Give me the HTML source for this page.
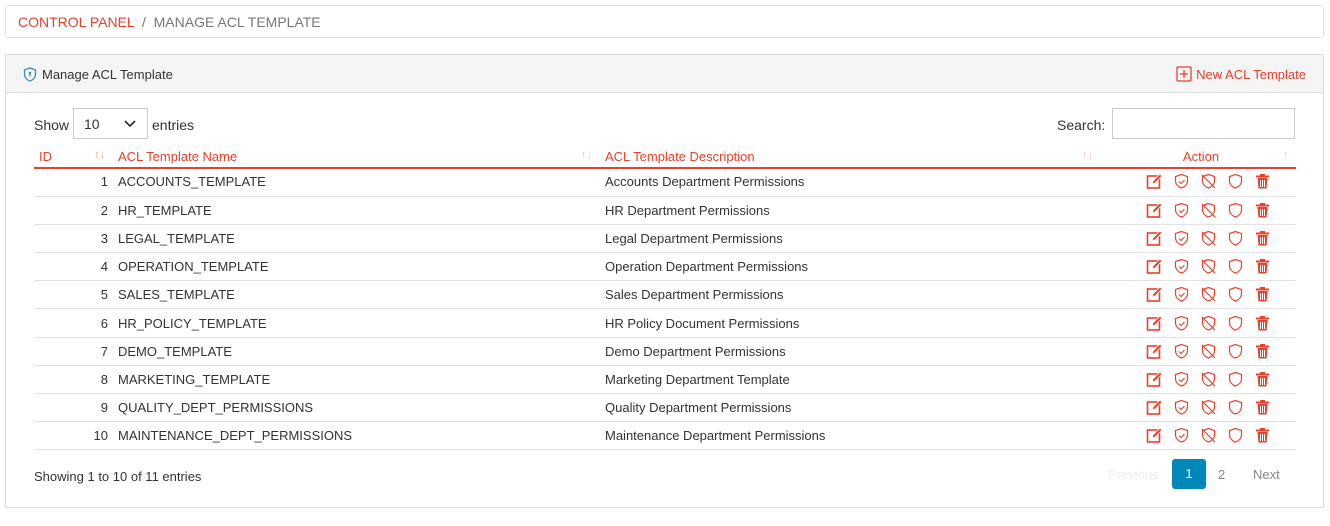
<!DOCTYPE html>
<html><head><style>
*{box-sizing:border-box;margin:0;padding:0}
body{width:1330px;height:526px;background:#fff;font-family:"Liberation Sans",sans-serif;font-size:13px;color:#333;position:relative;overflow:hidden}
.bc{position:absolute;left:5px;top:5px;width:1319px;height:33px;border:1px solid #e3e3e3;border-radius:3px;padding:8px 12px;font-size:14px;color:#777}
.bc span{color:#e8412c}
.panel{position:absolute;left:5px;top:54px;width:1319px;height:454px;border:1px solid #ddd}
.ph{height:38px;background:#f5f5f5;border-bottom:1px solid #ddd;position:relative}
.ph .t{position:absolute;left:17px;top:12px;display:flex;align-items:center;gap:5px}
.ph .n{position:absolute;right:17px;top:11px;color:#e8412c;display:flex;align-items:center;gap:4px}
.abs{position:absolute}
table{position:absolute;left:28px;top:90px;width:1262px;border-collapse:collapse}
th{color:#e8412c;font-weight:normal;text-align:left;height:23px;border-bottom:2px solid #e8412c;position:relative;padding-left:5px}
td{height:28.2px;border-bottom:1px solid #e3e3e3;padding-left:5px}
.s{position:absolute;right:8px;top:4px;color:#f4c0b8;font-size:11px}
.ic{display:flex;gap:10px;padding-left:40px;align-items:center}
</style></head><body>
<div class="bc"><span>CONTROL PANEL</span> &nbsp;/&nbsp; MANAGE ACL TEMPLATE</div>
<div class="panel">
<div class="ph"><div class="t"><svg width="14" height="15" viewBox="0 0 14 15"><path d="M7 1L1.5 3v4c0 3.5 2.5 6 5.5 7 3-1 5.5-3.5 5.5-7V3z" fill="none" stroke="#3a8fc0" stroke-width="1.3"/><circle cx="7" cy="6" r="1.3" fill="#3a8fc0"/><rect x="6.4" y="6.5" width="1.2" height="3" fill="#3a8fc0"/></svg>Manage ACL Template</div>
<div class="n"><svg width="16" height="16"><rect x="1" y="1" width="14" height="14" fill="none" stroke="#e8412c" stroke-width="1.3" rx="1"/><path d="M8 4v8M4 8h8" stroke="#e8412c" stroke-width="1.3"/></svg>New ACL Template</div></div>
<div class="abs" style="left:28px;top:62px;font-size:14px">Show</div>
<div class="abs" style="left:67px;top:53px;width:75px;height:31px;border:1px solid #ccc;font-size:14px;padding:7px 10px">10<svg class="abs" style="left:50px;top:11px" width="12" height="8"><path d="M1 1l5 5 5-5" fill="none" stroke="#333" stroke-width="1.8"/></svg></div>
<div class="abs" style="left:146px;top:62px;font-size:14px">entries</div>
<div class="abs" style="left:1051px;top:62px;font-size:14px">Search:</div>
<div class="abs" style="left:1106px;top:53px;width:183px;height:31px;border:1px solid #ccc"></div>
<table>
<tr><th style="width:79px">ID<span class="s" style="color:#f0a090">↑↓</span></th><th style="width:487px">ACL Template Name<span class="s">↑↓</span></th><th style="width:501px">ACL Template Description<span class="s">↑↓</span></th><th style="text-align:center">Action<span class="s">↑</span></th></tr>
</table>
<div id="rows"></div>
<div class="abs" style="left:28px;top:414px">Showing 1 to 10 of 11 entries</div>
<div class="abs" style="left:1102px;top:412px;color:#eee">Previous</div>
<div class="abs" style="left:1166px;top:404px;width:34px;height:30px;background:#0088b8;border-radius:3px;color:#fff;text-align:center;line-height:30px">1</div>
<div class="abs" style="left:1212px;top:412px;color:#888">2</div>
<div class="abs" style="left:1247px;top:412px;color:#888">Next</div>
</div>
<script>
var d=[["ACCOUNTS_TEMPLATE","Accounts Department Permissions"],["HR_TEMPLATE","HR Department Permissions"],["LEGAL_TEMPLATE","Legal Department Permissions"],["OPERATION_TEMPLATE","Operation Department Permissions"],["SALES_TEMPLATE","Sales Department Permissions"],["HR_POLICY_TEMPLATE","HR Policy Document Permissions"],["DEMO_TEMPLATE","Demo Department Permissions"],["MARKETING_TEMPLATE","Marketing Department Template"],["QUALITY_DEPT_PERMISSIONS","Quality Department Permissions"],["MAINTENANCE_DEPT_PERMISSIONS","Maintenance Department Permissions"]];
var R="#e8412c";
var sh='<path d="M8.5 1.5L2.5 3.5v4c0 4 3 6.5 6 7.5 3-1 6-3.5 6-7.5v-4z" fill="none" stroke="'+R+'" stroke-width="1.2"/>';
var ic='<svg width="17" height="17"><rect x="1.5" y="3" width="12" height="12" fill="none" stroke="'+R+'" stroke-width="1.6"/><path d="M6 11l1-3 7-7 2 2-7 7z" fill="'+R+'" stroke="#fff" stroke-width=".8"/></svg>'+
'<svg width="17" height="17">'+sh+'<path d="M6 8.5l2 2 3.5-3.5" fill="none" stroke="'+R+'" stroke-width="1.1"/></svg>'+
'<svg width="17" height="17">'+sh+'<path d="M2 2l13 13" stroke="'+R+'" stroke-width="1.2"/></svg>'+
'<svg width="17" height="17">'+sh+'</svg>'+
'<svg width="17" height="17"><rect x="2" y="2.5" width="13" height="2" fill="'+R+'"/><rect x="6" y="1" width="5" height="2" fill="'+R+'"/><path d="M3.5 5h10l-1 10.5h-8z" fill="'+R+'"/><path d="M6.5 7v7M8.5 7v7M10.5 7v7" stroke="#fff" stroke-width="1"/></svg>';
var h='<table style="top:113px">';
d.forEach(function(r,i){h+='<tr><td style="width:79px;text-align:right;padding-right:5px">'+(i+1)+'</td><td style="width:487px">'+r[0]+'</td><td style="width:501px">'+r[1]+'</td><td><div class="ic">'+ic+'</div></td></tr>';});
document.getElementById('rows').innerHTML=h+'</table>';
</script>
</body></html>
